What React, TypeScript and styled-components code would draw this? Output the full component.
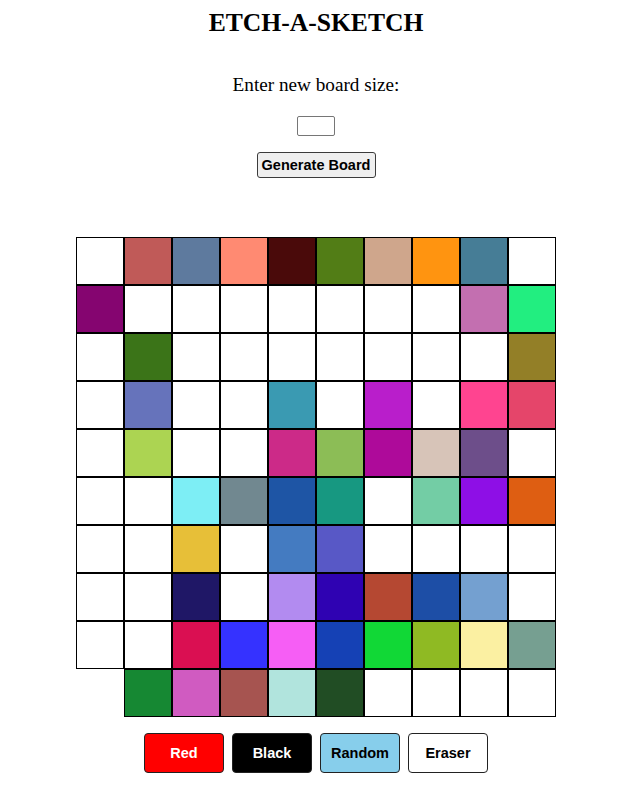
import React from "react";
import styled, { createGlobalStyle } from "styled-components";

const GlobalStyle = createGlobalStyle`
  html, body { background: #ffffff; }
  body {
    margin: 8px 10px 8px 8px;
    font-family: "Liberation Serif", "Times New Roman", serif;
    color: #000000;
  }
`;

const Page = styled.div`
  display: flex;
  flex-direction: column;
  align-items: center;
`;

const Title = styled.h1`
  margin: 0;
  font-size: 25.6px;
  font-weight: bold;
  line-height: 1.15;
`;

const Prompt = styled.p`
  margin: 37px 0 0;
  font-size: 19.2px;
  line-height: 1.15;
`;

const SizeInput = styled.input`
  box-sizing: border-box;
  margin-top: 19px;
  width: 38px;
  height: 20px;
  padding: 0;
  border: 1px solid #767676;
  border-radius: 2px;
  background: #ffffff;
  outline: none;
`;

const GenerateButton = styled.button`
  box-sizing: border-box;
  margin-top: 16px;
  width: 119px;
  height: 26px;
  padding: 0;
  background: #efefef;
  border: 1px solid #3b3b3b;
  border-radius: 3px;
  font-family: "Liberation Sans", Arial, sans-serif;
  font-weight: bold;
  font-size: 14.5px;
  color: #000000;
`;

const Board = styled.div`
  margin-top: 59px;
  width: 480px;
  display: flex;
  flex-wrap: wrap;
  justify-content: flex-end;
`;

const Cell = styled.div<{ $bg: string }>`
  box-sizing: border-box;
  width: 48px;
  height: 48px;
  border: 1px solid #000000;
  background: ${(p) => p.$bg};
`;

const Toolbar = styled.div`
  margin-top: 16px;
  display: flex;
  gap: 8px;
`;

const ColorButton = styled.button<{ $bg: string; $fg: string }>`
  box-sizing: border-box;
  width: 80px;
  height: 40px;
  padding: 0;
  background: ${(p) => p.$bg};
  color: ${(p) => p.$fg};
  border: 1px solid #222222;
  border-radius: 4px;
  font-family: "Liberation Sans", Arial, sans-serif;
  font-weight: bold;
  font-size: 14.5px;
`;

const W = "#ffffff";
const rows: string[][] = [
  [W, "#c05a58", "#5e7a9e", "#ff8a72", "#4a0a0a", "#527d16", "#cfa68c", "#ff9410", "#467d96", W],
  ["#850570", W, W, W, W, W, W, W, "#c36fb0", "#22ee80"],
  [W, "#3b7418", W, W, W, W, W, W, W, "#937f27"],
  [W, "#6673bb", W, W, "#3a9ab2", W, "#b91ecb", W, "#ff4490", "#e5456a"],
  [W, "#acd452", W, W, "#cc2a88", "#8cbd56", "#ae0a9a", "#d7c4b8", "#6d4e8a", W],
  [W, W, "#7deef5", "#718890", "#1e55a5", "#179881", W, "#73cda5", "#8e0fe6", "#de5e12"],
  [W, W, "#e7bf38", W, "#447bc1", "#5858c6", W, W, W, W],
  [W, W, "#1f1766", W, "#b28bf0", "#2f02b2", "#b54832", "#1d4ea6", "#74a0d0", W],
  [W, W, "#da0f52", "#3532ff", "#f65ef5", "#1541b5", "#11d836", "#8fba23", "#fbf0a2", "#769f91"],
  ["#168833", "#d05bc1", "#a65450", "#b1e4dd", "#214d24", W, W, W, W],
];

const cells = rows.flat();

const modes = [
  { label: "Red", bg: "#ff0000", fg: "#ffffff" },
  { label: "Black", bg: "#000000", fg: "#ffffff" },
  { label: "Random", bg: "#87ceeb", fg: "#000000" },
  { label: "Eraser", bg: "#ffffff", fg: "#000000" },
];

export default function App() {
  return (
    <>
      <GlobalStyle />
      <Page>
        <Title>ETCH-A-SKETCH</Title>
        <Prompt>Enter new board size:</Prompt>
        <SizeInput type="text" />
        <GenerateButton>Generate Board</GenerateButton>
        <Board>
          {cells.map((c, i) => (
            <Cell key={i} $bg={c} />
          ))}
        </Board>
        <Toolbar>
          {modes.map((m) => (
            <ColorButton key={m.label} $bg={m.bg} $fg={m.fg}>
              {m.label}
            </ColorButton>
          ))}
        </Toolbar>
      </Page>
    </>
  );
}
